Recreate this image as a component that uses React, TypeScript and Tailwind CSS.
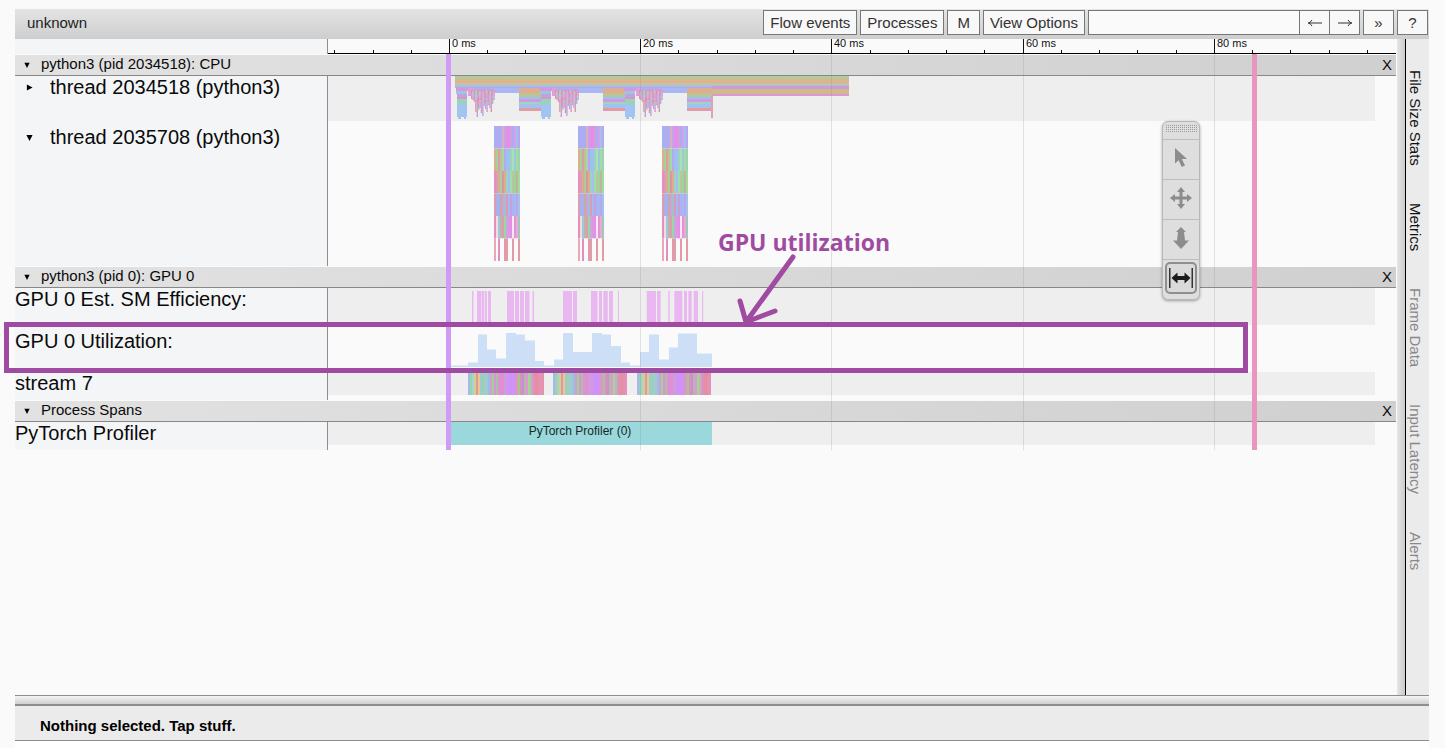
import type { ReactNode } from 'react';

type Rect = { x: number; y: number; w: number; h: number; fill: string };

const PX_PER_MS = 9.56;
const PERIODS = [0, 84, 168];

function Rects({ items }: { items: Rect[] }) {
  return (
    <>
      {items.map((r, i) => (
        <rect key={i} x={r.x} y={r.y} width={r.w} height={r.h} fill={r.fill} />
      ))}
    </>
  );
}

/* ---------- main thread: long frames on top, short calls hanging below ---------- */

const longFrames: Rect[] = [
  { x: 6, y: 0, w: 394, h: 3, fill: '#b2cb9c' },
  { x: 6, y: 3, w: 394, h: 5, fill: '#e2b28d' },
  { x: 6, y: 7, w: 394, h: 2, fill: '#bfc79c' },
  { x: 6, y: 9, w: 394, h: 2, fill: '#a9bfe6' },
  { x: 263, y: 10, w: 137, h: 3, fill: '#cf9bd6' },
  { x: 263, y: 13, w: 137, h: 5, fill: '#cfba90' },
  { x: 263, y: 18, w: 137, h: 2, fill: '#e096cf' },
];

const stepFrames: Rect[] = [
  { x: 6, y: 10, w: 89, h: 2, fill: '#b0a8f0' },
  { x: 7, y: 12, w: 12, h: 3, fill: '#d598dd' },
  { x: 7, y: 15, w: 11, h: 3, fill: '#9cc6da' },
  { x: 8, y: 18, w: 10, h: 3, fill: '#c3a0e2' },
  { x: 8, y: 21, w: 10, h: 2, fill: '#d795c8' },
  { x: 8, y: 23, w: 10, h: 5, fill: '#9bd3b8' },
  { x: 8, y: 28, w: 10, h: 13, fill: '#a2c4f0' },
  { x: 9, y: 41, w: 3, h: 2, fill: '#a2c4f0' },
  { x: 15, y: 41, w: 2, h: 2, fill: '#a2c4f0' },
  { x: 19, y: 12, w: 4, h: 8, fill: '#e0a0d4' },
  { x: 23, y: 12, w: 22, h: 3, fill: '#c3a5ea' },
  { x: 45, y: 12, w: 26, h: 5, fill: '#abb6f4' },
  { x: 70, y: 12, w: 25, h: 5, fill: '#dfae92' },
  { x: 70, y: 17, w: 25, h: 2, fill: '#c9bd92' },
  { x: 70, y: 19, w: 25, h: 2, fill: '#a4cf9b' },
  { x: 70, y: 21, w: 25, h: 2, fill: '#a6bcec' },
  { x: 70, y: 23, w: 25, h: 3, fill: '#cb9ce4' },
  { x: 70, y: 26, w: 25, h: 2, fill: '#a5d2ba' },
  { x: 70, y: 28, w: 25, h: 4, fill: '#a1c2ec' },
  { x: 70, y: 32, w: 25, h: 3, fill: '#df9ca6' },
];

const callColors = ['#e08cba', '#d69ad0', '#9cc9b6', '#c99fe0', '#d9989f', '#b4a9e4', '#de94c4'];
const callDepths = [9, 10, 12, 22, 27, 20, 18, 23, 26, 16, 19, 22, 15, 18, 22, 14, 10];

const nestedCalls: Rect[] = callDepths.flatMap((depth, col) => {
  const rows: Rect[] = [];
  for (let y = 0; y < depth; y += 2) {
    rows.push({
      x: 22 + col * 1.4,
      y: 14 + y,
      w: 1.4,
      h: Math.min(2, depth - y),
      fill: callColors[(col * col + y * 3 + ((col * y) % 5)) % callColors.length],
    });
  }
  return rows;
});

/* ---------- worker thread: six nested levels ---------- */

const levelPalettes: string[][] = [
  ['#a6b2f0', '#b3a9f2', '#a6b2f0', '#b3a9f2', '#d9b0c0', '#c4a4e8', '#e88cea', '#e88cea', '#c9a4d8', '#b3a9f2', '#cfa2f0', '#a6c0ea', '#b3a9f2'],
  ['#d9b08c', '#a4cf98', '#dc9ea0', '#bcc196', '#a4d6a8', '#b3a9f2', '#9fc0ec', '#9fc0ec', '#9bd3c0', '#a8e0b8', '#9fc6dc', '#a4dca0', '#9bd3b0'],
  ['#e58fc0', '#d99eb0', '#dcab90', '#a4cf98', '#d9989f', '#dcae8c', '#9bd3c8', '#a6c0ea', '#9fdcae', '#b4c898', '#9bd39c', '#c0b4a0', '#a0dc9c'],
  ['#dc9cb4', '#a6b2ea', '#a6b2f0', '#cfa4a8', '#c3a8d8', '#9fc0cc', '#dc9ab8', '#a6b8f0', '#c3a0e0', '#a9b4f0', '#a6b8ee', '#b3a9f2', '#a6c0ea'],
  ['#e58fb8', '#f0dce4', '#9fc8d8', '#c3b0a8', '#dc9ea8', '#9bd3b0', '#c8a8d8', '#dc98dc', '#e88cea', '#f4e8f4', '#e096d0', '#e8a8d8', '#9fc8b8'],
  ['#e8a8b4', '#fafafa', '#e090c0', '#fafafa', '#fafafa', '#e39aa5', '#dc9ea8', '#fafafa', '#fafafa', '#e39aa5', '#fafafa', '#fafafa', '#e39aa5'],
];

const workerStack: Rect[] = levelPalettes.flatMap((palette, level) =>
  palette.map((fill, i) => ({ x: i * 2, y: level * 22.5, w: 2, h: 22.5, fill })),
);

/* ---------- GPU counters ---------- */

const efficiencyBars: [number, number][] = [
  [23, 1.5], [28, 4.5], [33, 2], [35.7, 2.2], [39, 3],
  [58, 7], [66, 4], [71, 4], [76, 4.5], [83.5, 1.5],
  [114, 9], [124, 4], [142, 6.5], [150, 3], [154.3, 4.5], [160, 4], [169, 1],
  [197.7, 9.3], [208, 3.7], [219.3, 1.4], [225.3, 8], [235, 3], [239.3, 3.4], [244.7, 4.3], [253, 1.2],
];

const utilizationSteps: [number, number, number][] = [
  [2, 17, 1.5], [19, 10, 4.5], [29, 9, 32.5], [38, 9, 17.5], [47, 10, 8.5], [57, 10, 34],
  [67, 9, 32.5], [76, 10, 26.5], [86, 9, 6], [95, 10, 1.5], [105, 9, 7.5], [114, 10, 34],
  [124, 19, 15], [143, 10, 34], [153, 9, 32.5], [162, 10, 21], [172, 9, 4.5], [181, 10, 1.5],
  [191, 9, 15], [200, 10, 32.5], [210, 10, 7.5], [220, 9, 19.5], [229, 19, 33.5], [248, 15, 13.5],
];

const streamPalette = [
  '#a6b8f0', '#9bd3b0', '#9fd8c8', '#d8cc94', '#dc9a9c', '#e8c890', '#9fc8d8', '#9bd3a8', '#9fd0c8', '#9fc8d8',
  '#a6b8e8', '#c8a4c8', '#a4d098', '#dc92d8', '#a8c49c', '#e38fd8', '#dc90dc', '#e38fc8', '#c8a0e0', '#d495ea',
  '#cf92f8', '#cf92f8', '#cf92f8', '#d494e0', '#dc9ab8', '#a4c49c', '#e090b8', '#c490d8', '#b8b8a0', '#e096d8',
  '#a4d49c', '#b8bca8', '#dc92d0', '#e38fa8', '#e38f9c', '#e393b0', '#e38fc0', '#e393a8',
];

const streamKernels: Rect[] = streamPalette.map((fill, i) => ({ x: 19 + i * 2, y: 0, w: 2, h: 23, fill }));

/* ---------- layout pieces ---------- */

function TrackRow({
  label,
  children,
  height,
  shaded,
  toggle,
  overlay,
}: {
  label: string;
  children: ReactNode;
  height: string;
  shaded?: boolean;
  toggle?: string;
  overlay?: ReactNode;
}) {
  return (
    <div className="relative flex">
      <div className="flex w-[313px] shrink-0 items-start border-r border-[#8e8e8e] bg-[#f4f5f7] text-xl leading-[23px]">
        {toggle && (
          <button aria-label={`Toggle ${label}`} className="flex h-[22px] w-[35px] items-center pl-[11px]">
            <Triangle open={toggle === 'open'} />
          </button>
        )}
        <span>{label}</span>
      </div>
      <div className="mr-[21px] min-w-0 flex-1 pb-[5px]">
        <div className={`${height} ${shaded ? 'bg-[#eeeeee]' : ''}`}>
          <svg className="block h-full w-full" aria-hidden="true">
            <g transform="translate(121 0)">{children}</g>
          </svg>
        </div>
      </div>
      {overlay}
    </div>
  );
}

function Triangle({ open, small }: { open: boolean; small?: boolean }) {
  return (
    <svg viewBox="0 0 8 8" className={small ? 'size-[6px]' : 'size-[7px]'}>
      <path d={open ? 'M.5 1h7L4 8z' : 'M1 .5v7L7.500 4z'} fill="#000" />
    </svg>
  );
}

function SectionHeader({ title }: { title: string }) {
  return (
    <div className="mt-px flex h-[21px] items-center border-b border-[#888888] bg-linear-to-r from-[#e2e2e2] to-[#d0d0d0] text-[15px] leading-5">
      <button aria-label={`Toggle ${title}`} className="flex w-[26px] pb-px pl-[9px]">
        <Triangle open small />
      </button>
      <h2 className="flex-1 pb-[3px] leading-[17px]">{title}</h2>
      <button aria-label={`Hide ${title}`} className="w-[18px]">
        X
      </button>
    </div>
  );
}

function ToolbarButton({ children, className = 'px-[6px]' }: { children: ReactNode; className?: string }) {
  return (
    <button className={`h-[25px] border border-[#777777] bg-[#f8f8f8] text-[15px] leading-[23px] text-[#333333] ${className}`}>
      {children}
    </button>
  );
}

function Arrow({ back }: { back?: boolean }) {
  return (
    <svg width="14" height="8" viewBox="0 0 14 8" className={back ? 'mx-auto mt-px' : 'mx-auto mt-px rotate-180'}>
      <path d="M0 4h14M4 1Q3 3 .5 4 3 5 4 7" fill="none" stroke="#333" />
    </svg>
  );
}

function Ruler() {
  const minor = Array.from({ length: 28 }, (_, i) => i - 3);
  return (
    <div className="flex">
      <div className="w-[313px] shrink-0 border-r border-[#8e8e8e] bg-[#f4f5f7]" />
      <div className="h-[15px] min-w-0 flex-1 border-b border-black">
        <svg className="block h-full w-full overflow-visible" aria-label="Time ruler">
          <g transform="translate(121 0)" fontFamily="Liberation Sans, Arial, sans-serif" fontSize="11">
            {minor.map((n) => {
              const x = Math.round(n * 4 * PX_PER_MS);
              const major = n % 5 === 0;
              return <rect key={n} x={x} y={major ? 0 : 11} width={1} height={major ? 14 : 3} fill="#111" />;
            })}
            {[0, 20, 40, 60, 80].map((ms) => (
              <text key={ms} x={Math.round(ms * PX_PER_MS) + 3} y={8} fill="#111">
                {ms} ms
              </text>
            ))}
          </g>
        </svg>
      </div>
    </div>
  );
}

function Markers() {
  return (
    <svg className="pointer-events-none absolute top-[15px] left-[313px] h-[calc(100%-15px)] w-[calc(100%-313px)]" aria-hidden="true">
      <g transform="translate(121 0)">
        {[20, 40, 60, 80].map((ms) => (
          <rect key={ms} x={Math.round(ms * PX_PER_MS)} y={0} width={1} height="100%" fill="#888" opacity={0.22} />
        ))}
        <rect x={-3} y={0} width={5} height="100%" fill="#cf9bf4" />
        <rect x={803} y={0} width={5} height="100%" fill="#e895bf" />
      </g>
    </svg>
  );
}

function MouseModePalette() {
  return (
    <div
      role="toolbar"
      aria-label="Mouse mode"
      className="absolute top-[82px] right-[196px] z-10 flex w-[38px] flex-col rounded-md border border-[#b8b8b8] bg-[#dedede] shadow-[0_1px_3px_rgba(0,0,0,0.35)]"
    >
      <div className="flex h-[17px] items-start justify-center pt-[3px]">
        <svg width="31" height="8" aria-hidden="true">
          {[1, 3, 5, 7].map((y) => (
            <line key={y} x1="0" x2="31" y1={y - 0.5} y2={y - 0.5} stroke="#9a9a9a" strokeDasharray="1 1" />
          ))}
        </svg>
      </div>
      <button aria-label="Selection mode" className="flex h-10 items-center justify-center border-t border-[#bdbdbd] pb-[3px]">
        <svg width="16" height="20" viewBox="0 0 16 20">
          <path d="M2 0v15.500l3.600-3.300 3.200 6.800 3.200-1.500-3.100-6.500H14z" fill="#8c8c8c" />
        </svg>
      </button>
      <button aria-label="Pan mode" className="flex h-10 items-center justify-center border-t border-[#bdbdbd] pb-[3px]">
        <svg width="22" height="22" viewBox="0 0 22 22">
          <path
            d="M11 0l4 5h-2.500v4.500H17V7l5 4-5 4v-2.500h-4.500V17H15l-4 5-4-5h2.500v-4.500H5V15l-5-4 5-4v2.500h4.500V5H7z"
            fill="#8c8c8c"
          />
        </svg>
      </button>
      <button aria-label="Zoom mode" className="flex h-10 items-center justify-center border-t border-[#bdbdbd] pb-[3px]">
        <svg width="16" height="22" viewBox="0 0 16 22">
          <path d="M8 0l5 5h-2l1 8.500h4L8 22 0 13.500h4L5 5H3z" fill="#8c8c8c" />
        </svg>
      </button>
      <div className="flex h-10 justify-center border-t border-[#bdbdbd] pt-[2px]">
        <button
          aria-label="Timing mode"
          aria-pressed="true"
          className="flex h-8 w-8 items-center justify-center rounded-[5px] border-2 border-[#8f8f8f] bg-[#dadada]"
        >
          <svg width="24" height="20" viewBox="0 0 24 20" className="shrink-0">
            <path d="M0 0h1.500v20H0zM22.500 0H24v20h-1.500z" fill="#333" />
            <path d="M2.500 10l6-5.500v3.500h7V4.500l6 5.500-6 5.500V12h-7v3.500z" fill="#1c1c1c" />
          </svg>
        </button>
      </div>
    </div>
  );
}

function UtilizationCallout() {
  return (
    <>
      <div className="absolute -top-[8px] right-[148px] -left-[11px] z-20 h-[51px] border-[5px] border-[#a04ba2]" />
      <div className="absolute -top-[103px] left-[703px] z-20 w-[190px] text-[#a04ba2]">
        <p className="font-['Open_Sans',sans-serif] text-[23px] leading-[30px] font-bold whitespace-nowrap">GPU utilization</p>
        <svg width="80" height="74" viewBox="0 0 80 74" className="block overflow-visible" aria-hidden="true">
          <path
            d="M75 0L28 65M22 44l6 21 29-11"
            fill="none"
            stroke="currentColor"
            strokeWidth="5"
            strokeLinecap="round"
            strokeLinejoin="round"
          />
        </svg>
      </div>
    </>
  );
}

const sideTabs = [
  { label: 'File Size Stats', enabled: true },
  { label: 'Metrics', enabled: true },
  { label: 'Frame Data', enabled: false },
  { label: 'Input Latency', enabled: false },
  { label: 'Alerts', enabled: false },
];

export default function App() {
  return (
    <div className="flex min-h-screen flex-col bg-[#fafafa] pt-[9px] font-['Liberation_Sans',Arial,sans-serif] text-[#0a0a0a]">
      <header className="mr-4 ml-[15px] flex h-[30px] items-start gap-[3px] bg-linear-to-b from-[#e4e4e4] to-[#cecece] pt-px pr-px">
        <h1 className="flex-1 pl-3 text-[15px] leading-[26px] text-[#222222]">unknown</h1>
        <ToolbarButton>Flow events</ToolbarButton>
        <ToolbarButton>Processes</ToolbarButton>
        <ToolbarButton className="px-[9px]">M</ToolbarButton>
        <ToolbarButton>View Options</ToolbarButton>
        <div className="flex">
          <input aria-label="Search events" className="h-[25px] w-[211px] border border-r-0 border-[#777777] bg-[#fafafa] px-1 text-[15px]" />
          <ToolbarButton className="w-[30px] border-r-0">
            <Arrow back />
          </ToolbarButton>
          <ToolbarButton className="w-[31px]">
            <Arrow />
          </ToolbarButton>
        </div>
        <ToolbarButton className="w-[31px]">»</ToolbarButton>
        <ToolbarButton className="w-[31px]">?</ToolbarButton>
      </header>

      <div className="mr-4 ml-[15px] flex flex-1">
        <main className="relative mr-px min-w-0 flex-1">
          <div className="relative">
            <Ruler />
            <SectionHeader title="python3 (pid 2034518): CPU" />
            <TrackRow label="thread 2034518 (python3)" height="h-[45px]" shaded toggle="closed">
              {PERIODS.map((dx) => (
                <g key={dx} transform={`translate(${dx} 0)`}>
                  <Rects items={stepFrames} />
                  <Rects items={nestedCalls} />
                </g>
              ))}
              <Rects items={longFrames} />
              <rect x={262} y={20} width={2} height={22} fill="#e0a0b8" />
            </TrackRow>
            <TrackRow label="thread 2035708 (python3)" height="h-[135px]" toggle="open">
              {PERIODS.map((dx) => (
                <g key={dx} transform={`translate(${dx + 45} 0)`}>
                  <Rects items={workerStack} />
                </g>
              ))}
            </TrackRow>
            <SectionHeader title="python3 (pid 0): GPU 0" />
            <TrackRow label="GPU 0 Est. SM Efficiency:" height="h-[37px]" shaded>
              {efficiencyBars.map(([x, w]) => (
                <rect key={x} x={x} y={3} width={w} height={34} fill="#e9b8f0" />
              ))}
            </TrackRow>
            <TrackRow label="GPU 0 Utilization:" height="h-[37px]" overlay={<UtilizationCallout />}>
              {utilizationSteps.map(([x, w, h]) => (
                <rect key={x} x={x} y={37 - h} width={w} height={h} fill="#ccdff7" />
              ))}
            </TrackRow>
            <TrackRow label="stream 7" height="h-[23px]" shaded>
              {[0, 85, 169].map((dx) => (
                <g key={dx} transform={`translate(${dx} 0)`}>
                  <Rects items={streamKernels.slice(0, dx ? 37 : 38)} />
                </g>
              ))}
            </TrackRow>
            <SectionHeader title="Process Spans" />
            <TrackRow label="PyTorch Profiler" height="h-[23px]" shaded>
              <rect x={0} y={0} width={263} height={23} fill="#9bd8dc" />
              <text x={131} y={13} textAnchor="middle" fontSize="12" fill="#14282a">
                PyTorch Profiler (0)
              </text>
            </TrackRow>
            <Markers />
          </div>
          <MouseModePalette />
        </main>

        <div className="w-2 bg-linear-to-r from-[#e6e6e6] to-[#cccccc]" />
        <aside className="flex w-6 flex-col border-l border-black bg-[#ebebeb] pt-3">
          {sideTabs.map((tab) => (
            <button
              key={tab.label}
              disabled={!tab.enabled}
              className="w-[18px] shrink-0 pt-[19px] pb-[18px] text-[15px] leading-[18px] text-[#111111] [writing-mode:vertical-rl] disabled:text-[#888888]"
            >
              {tab.label}
            </button>
          ))}
        </aside>
      </div>

      <footer className="mr-4 ml-[15px] bg-white pb-[7px]">
        <div className="h-[11px] border-t border-b-2 border-[#8e8e8e] bg-linear-to-b from-[#f4f4f4] to-[#d0d0d0]" />
        <p className="h-[35px] border-b border-[#8e8e8e] bg-[#ebebeb] pl-[25px] text-[15px] leading-10 font-bold text-black">
          Nothing selected. Tap stuff.
        </p>
      </footer>
    </div>
  );
}
